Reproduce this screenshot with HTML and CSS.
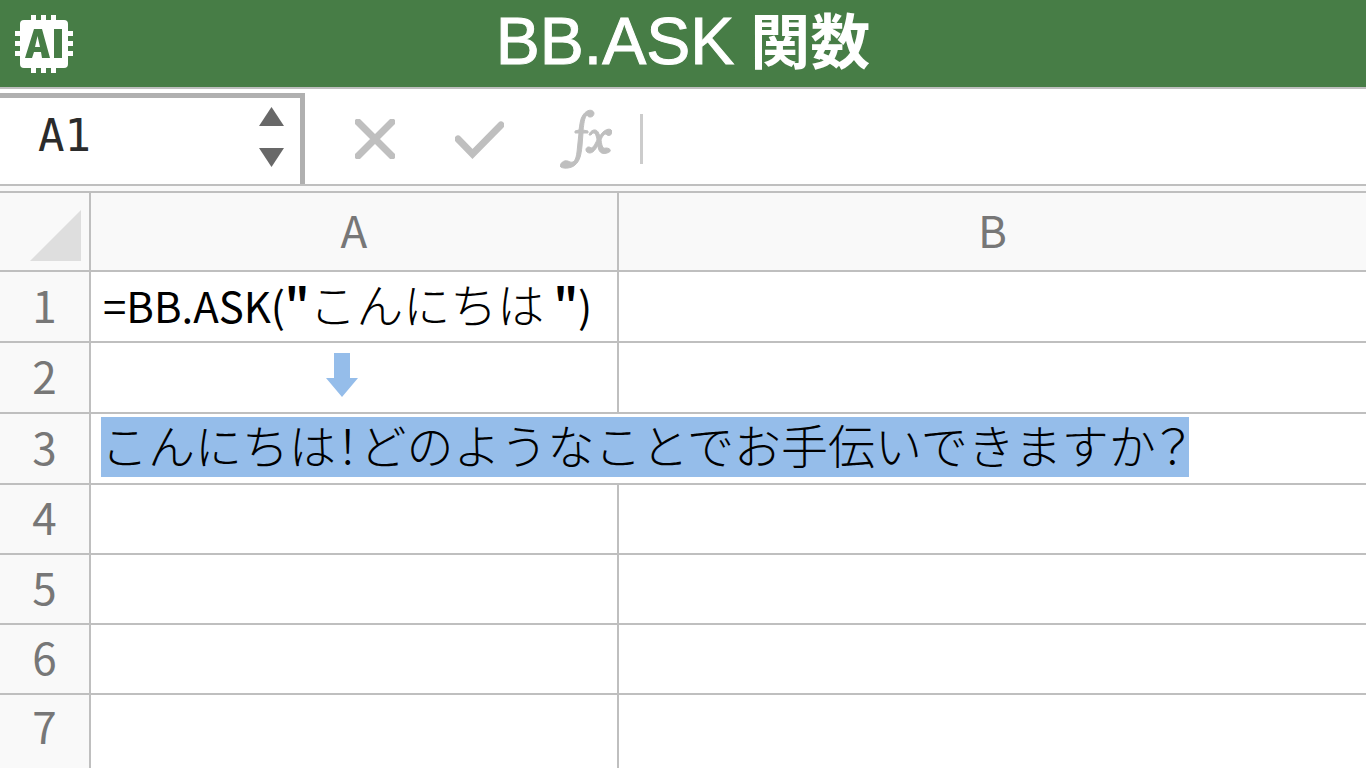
FILE: index.html
```
<!DOCTYPE html>
<html lang="ja">

<head>
    <meta charset="UTF-8">
    <meta name="viewport" content="width=device-width, initial-scale=1.0">
    <title>BB.ASK 関数</title>
    <link rel="stylesheet" href="styles.css">
</head>

<body>
    <header class="title-bar">
        <svg class="logo" viewBox="0 0 58 58" aria-hidden="true">
            <path fill="#fff" d="M16 0h5v5h5V0h5v5h5V0h5v5h8q4 0 4 4v7h5v5h-5v5h5v5h-5v5h5v5h-5v8q0 4-4 4h-8v5h-5v-5h-5v5h-5v-5h-5v5h-5v-5H9q-4 0-4-4v-8H0v-5h5v-5H0v-5h5v-5H0v-5h5V9q0-4 4-4h7z" />
            <path fill="#477d46" fill-rule="evenodd" d="M19 14h8l8 29h-8l-1-6h-7l-2 6h-7zM22.500 21L20 32h5zM39 14h8v29h-8z" />
        </svg>
        <h1><span class="title-latin">BB.ASK</span><span class="title-kanji">関数</span></h1>
    </header>

    <div class="toolbar">
        <div class="name-box">
            <input class="cell-name" type="text" value="A1" aria-label="セル名">
            <div class="stepper">
                <button type="button" aria-label="上へ">
                    <svg width="25" height="19" viewBox="0 0 25 19"><path d="M12.500 0L25 19H0z" /></svg>
                </button>
                <button type="button" aria-label="下へ">
                    <svg width="25" height="19" viewBox="0 0 25 19"><path d="M0 0h25L12.500 19z" /></svg>
                </button>
            </div>
        </div>
        <div class="tools">
            <button type="button" aria-label="キャンセル">
                <svg width="40" height="40" viewBox="0 0 40 40"><path class="line" d="M3 3l34 34M37 3L3 37" /></svg>
            </button>
            <button type="button" aria-label="入力">
                <svg width="49" height="40" viewBox="0 0 49 40"><path class="line" d="M3 20l14.500 15L46 6" /></svg>
            </button>
            <button type="button" aria-label="関数の挿入">
                <svg class="fx" width="52" height="60" viewBox="0 0 52 60">
                    <path d="M34 4C33 0 27 0 23 6C20 10 20 16 19 21L15 22V24H19L17 43C16 51 14 54 10 53C5 50 1 53 0 57C1 60 11 60 15 56C20 52 21 46 22 37L23 24H28V22L23 21C24 15 24 9 27 6C28 9 34 9 34 4z" />
                    <path d="M29 26C30 21 37 18 39 25L40 27C43 21 50 18 52 22C53 26 48 28 46 25C44 25 42 28 41 31C42 38 43 40 46 39C51 39 52 43 47 44C41 46 38 42 38 36C35 42 31 46 27 43C24 40 28 36 31 39C33 39 35 35 37 31C36 24 34 22 31 26z" />
                </svg>
            </button>
        </div>
        <input class="formula" type="text" aria-label="数式">
    </div>

    <table class="sheet">
        <colgroup>
            <col class="col-number">
            <col class="col-a">
            <col>
        </colgroup>
        <thead>
            <tr>
                <th class="corner"><svg width="51" height="51" viewBox="0 0 51 51" aria-hidden="true"><path d="M51 0v51H0z" /></svg></th>
                <th>A</th>
                <th>B</th>
            </tr>
        </thead>
        <tbody>
            <tr>
                <th>1</th>
                <td class="code">=BB.ASK(<b>"</b><span class="kana">こんにちは</span> <b>"</b>)</td>
                <td></td>
            </tr>
            <tr>
                <th>2</th>
                <td class="arrow"><svg width="32" height="44" viewBox="0 0 32 44" aria-hidden="true"><path d="M8 0h16v25h8L16 44 0 25h8z" /></svg></td>
                <td></td>
            </tr>
            <tr>
                <th>3</th>
                <td class="answer" colspan="2"><span class="selected kana">こんにちは<span class="mark">！</span>どのようなことでお手伝いできますか<span class="mark">？</span></span></td>
            </tr>
            <tr>
                <th>4</th>
                <td></td>
                <td></td>
            </tr>
            <tr>
                <th>5</th>
                <td></td>
                <td></td>
            </tr>
            <tr>
                <th>6</th>
                <td></td>
                <td></td>
            </tr>
            <tr>
                <th>7</th>
                <td></td>
                <td></td>
            </tr>
        </tbody>
    </table>
</body>

</html>
```
FILE: styles.css
```
:root {
    --green: #477d46;
    --line: #bfbfbf;
    --head-bg: #f9f9f9;
    --head-text: #777;
    --select: #95bdea;
}

* {
    margin: 0;
    padding: 0;
    box-sizing: border-box;
    font-family: 'Noto Sans CJK JP', sans-serif;
}

body {
    background-color: white;
    height: 100vh;
    overflow: hidden;
}

.title-bar {
    display: grid;
    grid-template-columns: 58px 1fr 58px;
    grid-template-rows: 100%;
    align-items: center;
    height: 89px;
    padding: 0 15px;
    background-color: var(--green);
    border-bottom: 2px solid var(--line);
    color: white;
}

.logo {
    width: 58px;
    height: 58px;
}

h1 {
    display: flex;
    justify-content: center;
    align-items: baseline;
    gap: 16px;
    padding-bottom: 8px;
    line-height: 77px;
}

.title-latin {
    font-family: 'Liberation Sans', sans-serif;
    font-size: 66px;
    font-weight: 400;
    -webkit-text-stroke: 1px white;
}

.title-kanji {
    font-size: 60px;
    font-weight: 700;
}

button {
    display: flex;
    background: none;
    border: none;
    cursor: pointer;
}

input {
    border: none;
    outline: none;
    background: none;
    min-width: 0;
}

.toolbar {
    display: flex;
    align-items: center;
    height: 97px;
    padding-top: 4px;
    border-bottom: 2px solid var(--line);
}

.name-box {
    display: flex;
    align-items: center;
    justify-content: space-between;
    width: 305px;
    height: 91px;
    padding: 0 16px 8px 38px;
    border: solid #b0b0b0;
    border-width: 5px 5px 0 0;
}

.cell-name {
    width: 160px;
    height: 72px;
    padding-bottom: 4px;
    font-family: 'DejaVu Sans Mono', monospace;
    font-size: 44px;
    color: #2b2b2b;
}

.stepper {
    display: flex;
    flex-direction: column;
    gap: 22px;
    fill: #686868;
}

.tools {
    display: flex;
    align-items: center;
    gap: 60px;
    padding: 0 28px 0 50px;
    fill: var(--line);
}

.line {
    fill: none;
    stroke: var(--line);
    stroke-width: 7;
    stroke-linecap: round;
}

.fx {
    stroke: var(--line);
    stroke-width: 1;
}

.tools button:last-child {
    margin-left: -4px;
}

.formula {
    flex: 1;
    height: 50px;
    padding-left: 12px;
    border-left: 3px solid #ccc;
    font-size: 44px;
}

.sheet {
    width: 100%;
    margin-top: 5px;
    border-top: 2px solid var(--line);
    border-spacing: 0;
    table-layout: fixed;
    box-shadow: 0 -5px var(--head-bg);
}

.col-number {
    width: 91px;
}

.col-a {
    width: 528px;
}

th,
td {
    height: 71px;
    border-right: 2px solid var(--line);
    border-bottom: 2px solid var(--line);
    font-size: 44px;
    line-height: 60px;
    white-space: nowrap;
}

th {
    height: 70px;
    padding-bottom: 6px;
    background-color: var(--head-bg);
    color: var(--head-text);
    font-weight: 400;
}

th:last-child,
td:last-child {
    border-right: none;
}

tbody tr:nth-child(n + 4) > * {
    height: 70px;
}

tbody tr:last-child > * {
    height: 76px;
    padding-bottom: 16px;
    border-bottom: none;
}

thead th {
    height: 79px;
}

.corner {
    padding: 8px 8px 0 0;
    text-align: right;
}

.corner svg {
    display: block;
    margin-left: auto;
    fill: #dedede;
}

td {
    padding-left: 10px;
}

.code {
    padding: 0 0 6px 12px;
    font-size: 42px;
}

.kana {
    font-size: 47px;
    font-weight: 300;
}

.mark {
    font-feature-settings: 'palt';
}

.arrow svg {
    display: block;
    margin: 0 auto;
    fill: var(--select);
}

.arrow {
    padding: 0 24px 6px 0;
}

.answer {
    padding-bottom: 4px;
}

.selected {
    display: block;
    width: fit-content;
    height: 60px;
    background-color: var(--select);
    line-height: 54px;
}
```
